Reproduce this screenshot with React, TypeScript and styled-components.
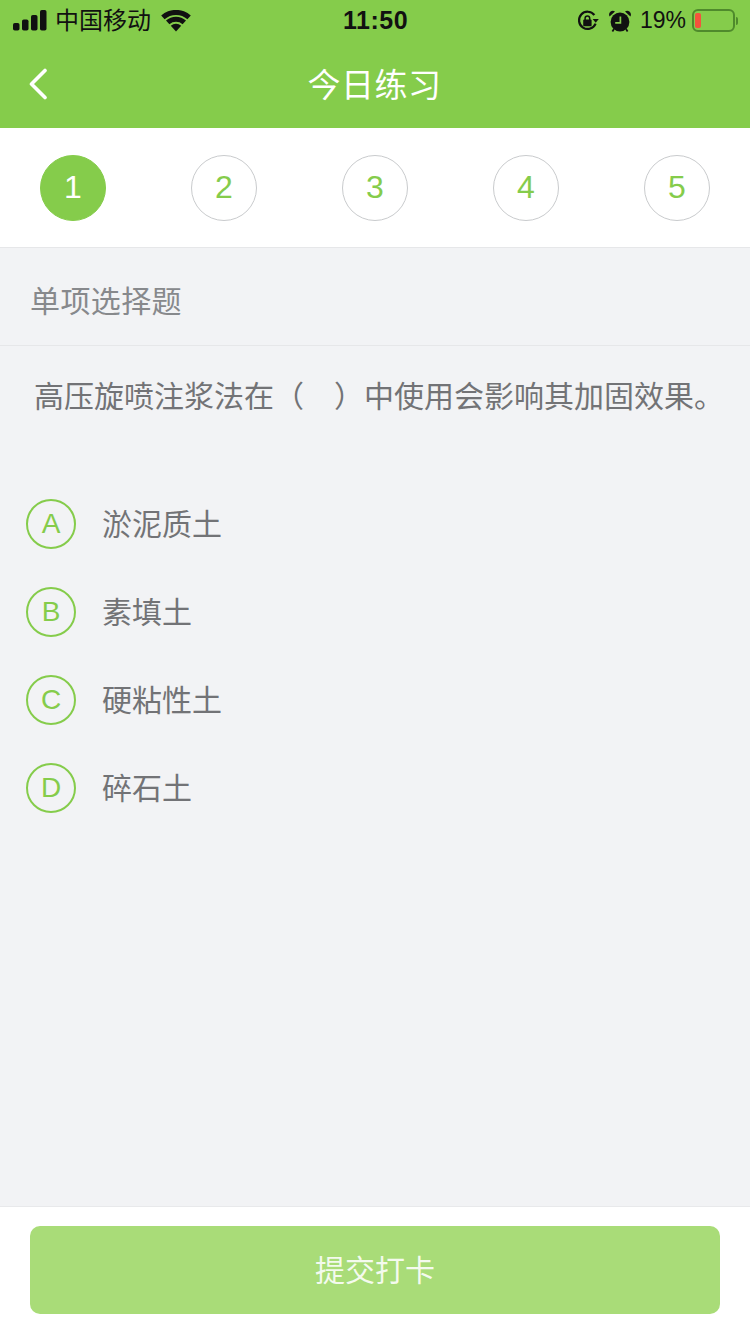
import React from 'react'
import styled, { createGlobalStyle } from 'styled-components'

const GREEN = '#85cc4b'
const FONT = `"Liberation Sans", "Noto Sans CJK SC", sans-serif`

const STEPS = [1, 2, 3, 4, 5]
const OPTIONS = [
    { letter: 'A', label: '淤泥质土' },
    { letter: 'B', label: '素填土' },
    { letter: 'C', label: '硬粘性土' },
    { letter: 'D', label: '碎石土' },
]

const GlobalStyle = createGlobalStyle`
    html, body {
        margin: 0;
        padding: 0;
        height: 100%;
        background: #f2f3f5;
    }
    * {
        box-sizing: border-box;
    }
`

const SignalIcon = () => (
    <svg width="34" height="21" viewBox="0 0 34 21" fill="#111">
        <rect x="0" y="13" width="6.5" height="7.5" rx="1.8" />
        <rect x="9" y="9.5" width="6.5" height="11" rx="1.8" />
        <rect x="18" y="5" width="6.5" height="15.5" rx="1.8" />
        <rect x="27" y="0" width="6.5" height="20.5" rx="1.8" />
    </svg>
)

const WifiIcon = () => (
    <svg width="30" height="22" viewBox="0 0 30 22" fill="#111">
        <path d="M15 21.5 L9.8 15.8 a7.8 7.8 0 0 1 10.4 0 Z" />
        <path d="M8.4 14.2 L5 10.6 a15 15 0 0 1 20 0 L21.6 14.2 a10.2 10.2 0 0 0 -13.2 0 Z" />
        <path d="M3.6 9.2 L0.2 5.6 a22 22 0 0 1 29.6 0 L26.4 9.2 a17.4 17.4 0 0 0 -22.8 0 Z" />
    </svg>
)

const RotationLockIcon = () => (
    <svg width="22" height="22" viewBox="0 0 22 22" fill="none">
        <path
            d="M18.6 13.6 A8.6 8.6 0 1 1 17.4 5"
            stroke="#111"
            strokeWidth="2.2"
        />
        <path d="M15.6 9 L21.8 9 L18.7 12.8 Z" fill="#111" />
        <rect x="6.2" y="9.6" width="8.4" height="6.6" rx="1" fill="#111" />
        <path
            d="M8.1 10 V8.2 a2.3 2.3 0 0 1 4.6 0 V10"
            stroke="#111"
            strokeWidth="1.5"
        />
    </svg>
)

const AlarmIcon = () => (
    <svg width="22" height="22" viewBox="0 0 22 22" fill="none">
        <circle cx="11" cy="12" r="9.4" fill="#111" />
        <path d="M11.4 6.5 V12.8 H6.2" stroke="#85cc4b" strokeWidth="1.7" />
        <path d="M0.6 6.4 L6 1.4 A3.8 3.8 0 0 0 0.6 6.4 Z" fill="#111" />
        <path d="M21.4 6.4 L16 1.4 A3.8 3.8 0 0 1 21.4 6.4 Z" fill="#111" />
        <path
            d="M5 19 L3.4 21.4 M17 19 L18.6 21.4"
            stroke="#111"
            strokeWidth="1.8"
        />
    </svg>
)

const BackIcon = () => (
    <svg width="20" height="32" viewBox="0 0 20 32" fill="none">
        <path
            d="M17 2.5 L3.5 16 L17 29.5"
            stroke="#fff"
            strokeWidth="3.6"
            strokeLinecap="round"
            strokeLinejoin="round"
        />
    </svg>
)

export default function App() {
    return (
        <Page>
            <GlobalStyle />
            <Header>
                <StatusBar>
                    <StatusSide>
                        <SignalIcon />
                        <Carrier>中国移动</Carrier>
                        <WifiIcon />
                    </StatusSide>
                    <Clock>11:50</Clock>
                    <StatusRight>
                        <RotationLockIcon />
                        <AlarmIcon />
                        <Percent>19%</Percent>
                        <Battery>
                            <BatteryLevel />
                        </Battery>
                        <BatteryCap />
                    </StatusRight>
                </StatusBar>
                <NavBar>
                    <BackButton>
                        <BackIcon />
                    </BackButton>
                    <NavTitle>今日练习</NavTitle>
                </NavBar>
            </Header>
            <StepRow>
                {STEPS.map((step) => (
                    <Step key={step} active={step === 1}>
                        {step}
                    </Step>
                ))}
            </StepRow>
            <SectionTitle>单项选择题</SectionTitle>
            <Question>高压旋喷注浆法在（&emsp;）中使用会影响其加固效果。</Question>
            <OptionList>
                {OPTIONS.map((option) => (
                    <Option key={option.letter}>
                        <OptionBadge>{option.letter}</OptionBadge>
                        <OptionLabel>{option.label}</OptionLabel>
                    </Option>
                ))}
            </OptionList>
            <Footer>
                <SubmitButton>提交打卡</SubmitButton>
            </Footer>
        </Page>
    )
}

const Page = styled.div`
    width: 750px;
    height: 1334px;
    display: flex;
    flex-direction: column;
    overflow: hidden;
    background: #f2f3f5;
    font-family: ${FONT};
`

const Header = styled.header`
    height: 128px;
    background: ${GREEN};
`

const StatusBar = styled.div`
    height: 40px;
    padding: 1px 12px 0 13px;
    display: flex;
    align-items: center;
    justify-content: space-between;
    color: #111;
`

const StatusSide = styled.div`
    width: 240px;
    display: flex;
    align-items: center;
`

const StatusRight = styled(StatusSide)`
    justify-content: flex-end;
    gap: 10px;
`

const Carrier = styled.span`
    margin: 0 10px 0 8px;
    font-size: 24px;
    line-height: 40px;
`

const Clock = styled.span`
    font-size: 25px;
    font-weight: 700;
    letter-spacing: 0.5px;
`

const Percent = styled.span`
    margin: 0 -4px 0 -1px;
    font-size: 23px;
`

const Battery = styled.div`
    width: 43px;
    height: 23px;
    padding: 2px 1px;
    border: 2px solid #4f8a2c;
    border-radius: 6px;
`

const BatteryLevel = styled.div`
    width: 6px;
    height: 15px;
    border-radius: 2px;
    background: #f4533c;
`

const BatteryCap = styled.div`
    width: 2px;
    height: 8px;
    margin-left: -9px;
    border-radius: 0 2px 2px 0;
    background: #4f8a2c;
`

const NavBar = styled.nav`
    position: relative;
    height: 88px;
    display: flex;
    align-items: center;
    justify-content: center;
`

const BackButton = styled.div`
    position: absolute;
    left: 28px;
    top: 28px;
    display: flex;
`

const NavTitle = styled.h1`
    margin: 0 1px 2px 0;
    font-size: 33px;
    font-weight: 400;
    letter-spacing: 0.5px;
    color: #fff;
`

const StepRow = styled.div`
    height: 120px;
    padding: 0 40px;
    display: flex;
    align-items: center;
    justify-content: space-between;
    background: #fff;
    border-bottom: 1px solid #e6e7e9;
`

const Step = styled.div<{ active: boolean }>`
    width: 66px;
    height: 66px;
    display: flex;
    align-items: center;
    justify-content: center;
    border-radius: 50%;
    border: 1px solid ${(props) => (props.active ? GREEN : '#c9cbcd')};
    background: ${(props) => (props.active ? GREEN : '#fff')};
    color: ${(props) => (props.active ? '#fff' : GREEN)};
    font-size: 32px;
`

const SectionTitle = styled.div`
    height: 98px;
    padding: 4px 0 0 30px;
    display: flex;
    align-items: center;
    border-bottom: 1px solid #e6e7e9;
    color: #87898c;
    font-size: 30px;
    letter-spacing: 0.4px;
`

const Question = styled.div`
    padding: 29px 0 0 34px;
    color: #727376;
    font-size: 30px;
    line-height: 44px;
    white-space: nowrap;
`

const OptionList = styled.div`
    flex: 1;
    padding: 80px 0 0 26px;
    display: flex;
    flex-direction: column;
    gap: 38px;
`

const Option = styled.div`
    display: flex;
    align-items: center;
    gap: 26px;
`

const OptionBadge = styled.div`
    width: 50px;
    height: 50px;
    display: flex;
    align-items: center;
    justify-content: center;
    border: 2px solid ${GREEN};
    border-radius: 50%;
    color: ${GREEN};
    font-size: 28px;
`

const OptionLabel = styled.span`
    margin-bottom: 4px;
    color: #727376;
    font-size: 30px;
`

const Footer = styled.footer`
    height: 128px;
    padding: 19px 30px 0;
    background: #fff;
    border-top: 1px solid #e8e9eb;
`

const SubmitButton = styled.div`
    height: 88px;
    padding-bottom: 4px;
    display: flex;
    align-items: center;
    justify-content: center;
    border-radius: 10px;
    background: #a9dc78;
    color: rgba(255, 255, 255, 0.88);
    font-size: 30px;
`
